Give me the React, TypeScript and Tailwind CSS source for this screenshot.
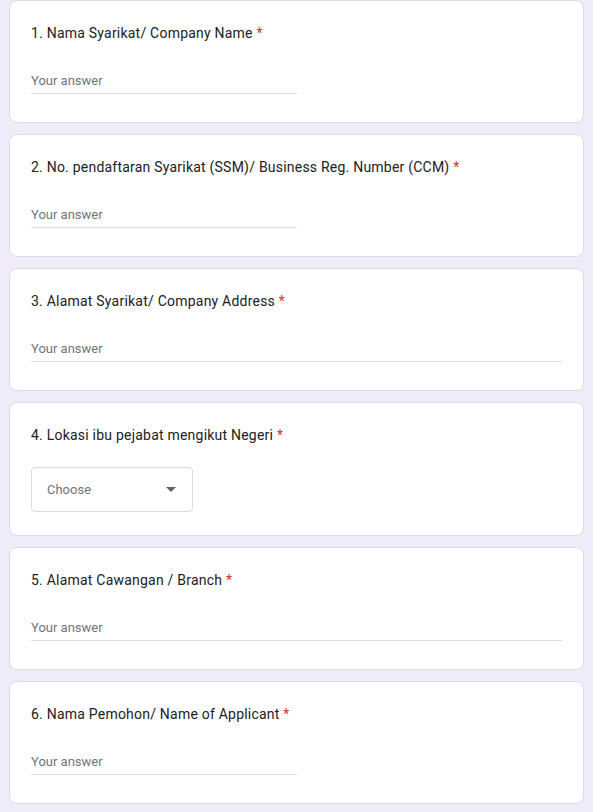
const questions = [
  { n: 1, title: "Nama Syarikat/ Company Name", kind: "short" },
  { n: 2, title: "No. pendaftaran Syarikat (SSM)/ Business Reg. Number (CCM)", kind: "short" },
  { n: 3, title: "Alamat Syarikat/ Company Address", kind: "long" },
  { n: 4, title: "Lokasi ibu pejabat mengikut Negeri", kind: "select" },
  { n: 5, title: "Alamat Cawangan / Branch", kind: "long" },
  { n: 6, title: "Nama Pemohon/ Name of Applicant", kind: "short" },
];

const Question = ({ n, title, kind }: { n: number; title: string; kind: string }) => (
  <div className="rounded-lg border border-[#dadce0] bg-white px-[21px] pt-[22px] pb-[28px]">
    <div className="text-[14px] leading-[20px] tracking-[0.22px] text-[#202124]">
      {n}. {title} <span className="text-[#d93025]">*</span>
    </div>
    {kind === "select" ? (
      <div className="mt-[22px] mb-[-5px] flex h-[45px] w-[162px] items-center justify-between rounded border border-[#dadce0] pl-[15px] pr-[16px]">
        <span className="text-[13px] text-[#70757a]">Choose</span>
        <svg width="10" height="5" viewBox="0 0 10 5">
          <path d="M0 0 L10 0 L5 5 Z" fill="#5f6368" />
        </svg>
      </div>
    ) : (
      <div
        className={`mt-[30px] border-b border-[#dadce0] pb-[4px] text-[13px] leading-[16px] text-[#70757a] ${
          kind === "long" ? "w-full" : "w-[266px]"
        }`}
      >
        Your answer
      </div>
    )}
  </div>
);

export default function App() {
  return (
    <div
      className="min-h-screen bg-[#f0ebf8] px-[9px] flex flex-col gap-[11px]"
      style={{ fontFamily: "Roboto, 'Liberation Sans', sans-serif" }}
    >
      {questions.map((q) => (
        <Question key={q.n} {...q} />
      ))}
    </div>
  );
}
